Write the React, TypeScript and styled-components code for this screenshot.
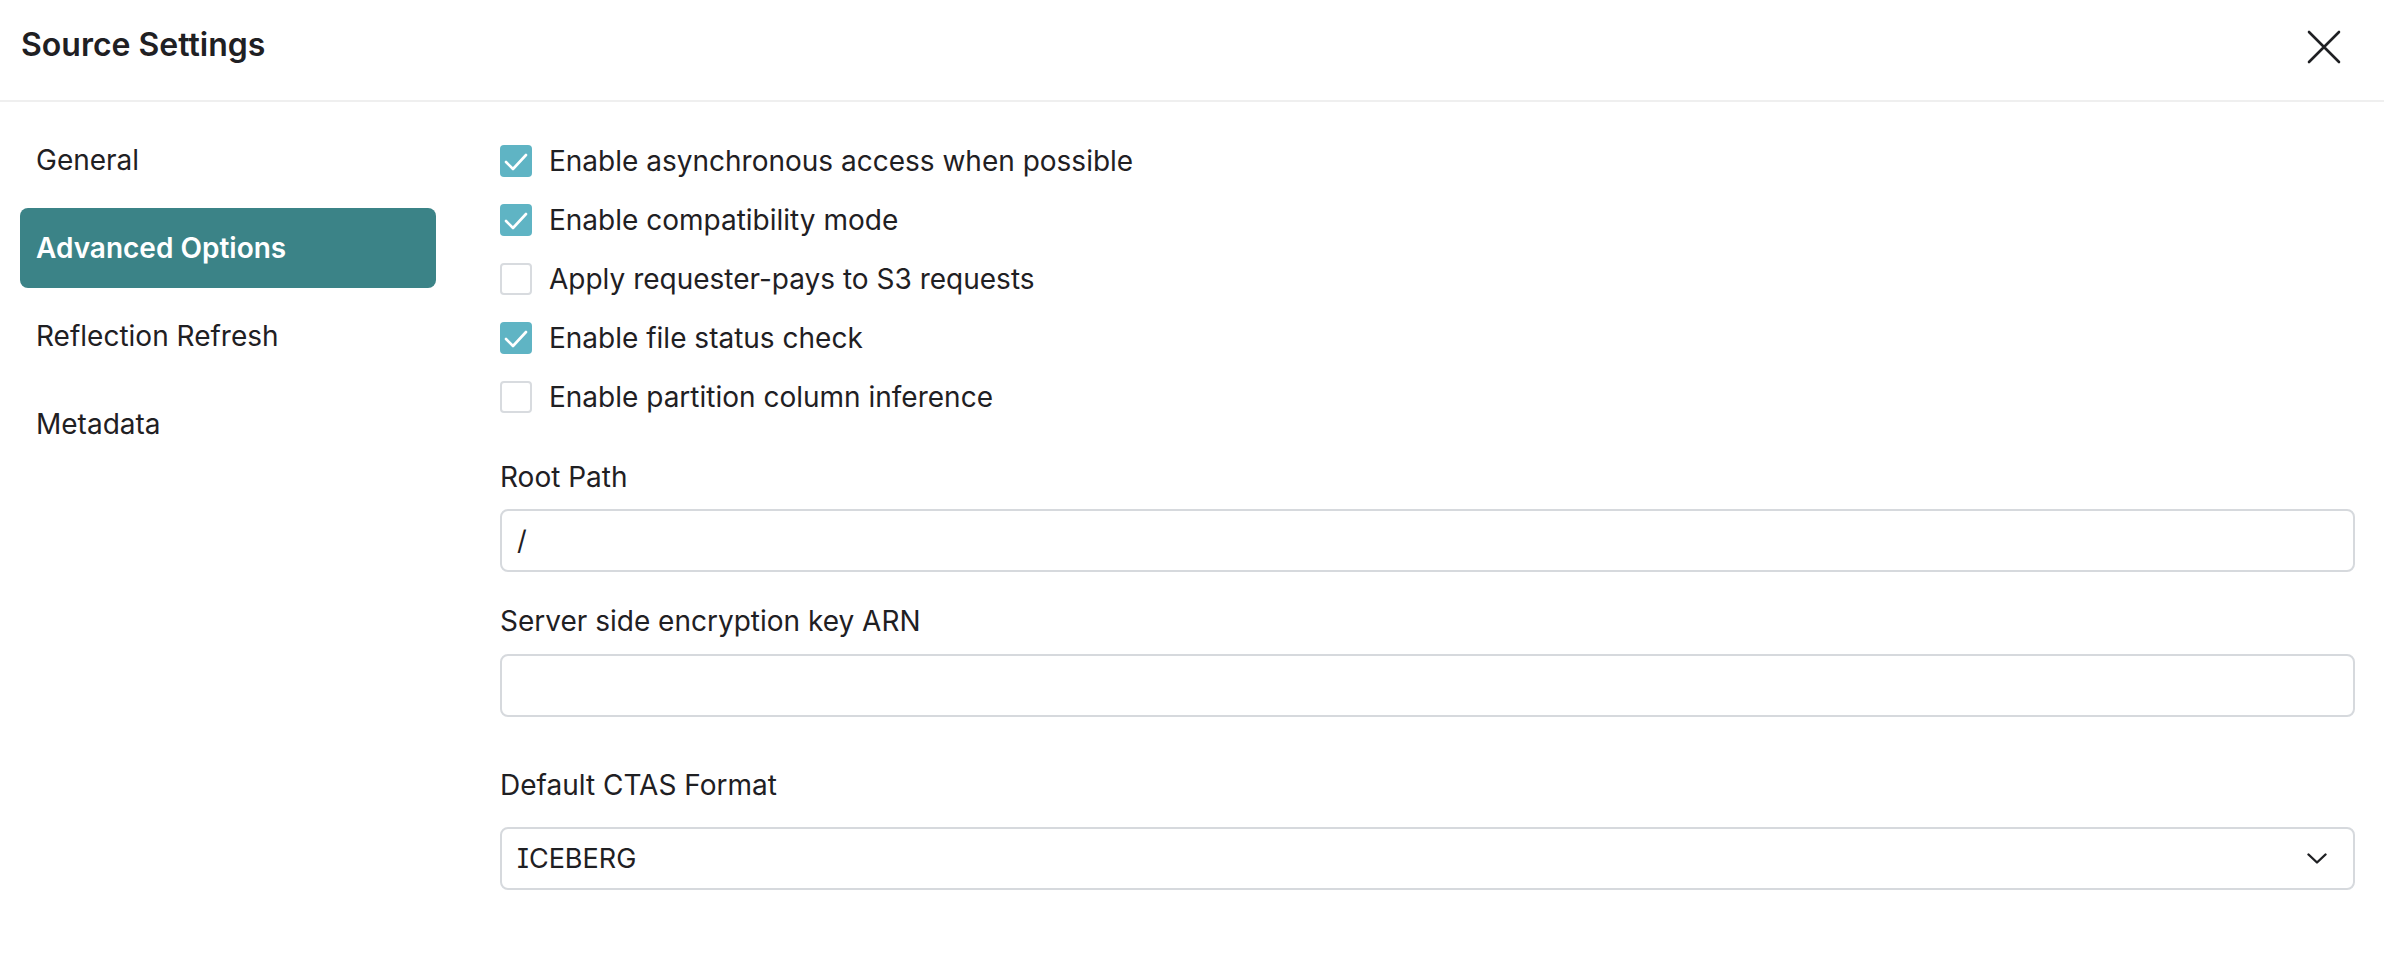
import React from "react";
import styled, { createGlobalStyle } from "styled-components";

const Global = createGlobalStyle`
  html, body { margin: 0; padding: 0; background: #ffffff; }
  body {
    font-family: Inter, "Noto Sans", "Liberation Sans", sans-serif;
    color: #1f2023;
    -webkit-font-smoothing: antialiased;
  }
  * { box-sizing: border-box; }
`;

const Dialog = styled.div`
  width: 2384px;
  height: 970px;
  background: #fff;
  display: flex;
  flex-direction: column;
`;

const Header = styled.header`
  height: 102px;
  flex: none;
  display: flex;
  align-items: flex-start;
  justify-content: space-between;
  padding: 27px 43px 0 21px;
  border-bottom: 2px solid #efefef;
`;

const Title = styled.h1`
  margin: 0;
  font-size: 32px;
  line-height: 36px;
  font-weight: 600;
  color: #1f2023;
`;

const CloseButton = styled.button`
  margin-top: 3px;
  width: 34px;
  height: 34px;
  padding: 0;
  border: 0;
  background: transparent;
  display: flex;
  align-items: center;
  justify-content: center;
  cursor: pointer;
`;

const Body = styled.div`
  flex: 1;
  display: flex;
  gap: 64px;
  padding: 0 29px 0 20px;
`;

const Sidebar = styled.nav`
  width: 416px;
  flex: none;
  display: flex;
  flex-direction: column;
  gap: 8px;
  padding-top: 18px;
`;

const NavItem = styled.div<{ $active?: boolean }>`
  height: 80px;
  display: flex;
  align-items: center;
  padding-left: 16px;
  border-radius: 8px;
  font-size: 28px;
  line-height: 33px;
  font-weight: ${(p) => (p.$active ? 600 : 400)};
  color: ${(p) => (p.$active ? "#ffffff" : "#1f2023")};
  background: ${(p) => (p.$active ? "#3b8387" : "transparent")};
`;

const Content = styled.main`
  flex: 1;
  display: flex;
  flex-direction: column;
  padding-top: 43px;
`;

const CheckList = styled.div`
  display: flex;
  flex-direction: column;
  gap: 27px;
`;

const CheckRow = styled.label`
  height: 32px;
  display: flex;
  align-items: center;
  gap: 17px;
  font-size: 28px;
  line-height: 33px;
  color: #1f2023;
`;

const Box = styled.span<{ $checked?: boolean }>`
  width: 32px;
  height: 32px;
  flex: none;
  border-radius: 4px;
  display: flex;
  align-items: center;
  justify-content: center;
  background: ${(p) => (p.$checked ? "#5fb4c4" : "#ffffff")};
  border: ${(p) => (p.$checked ? "none" : "2px solid #d8dbdf")};
`;

const Field = styled.div<{ $top: number; $gap: number }>`
  display: flex;
  flex-direction: column;
  gap: ${(p) => p.$gap}px;
  margin-top: ${(p) => p.$top}px;
`;

const Label = styled.div`
  font-size: 28px;
  line-height: 33px;
  color: #1f2023;
`;

const Input = styled.div`
  height: 63px;
  border: 2px solid #d6d9dd;
  border-radius: 8px;
  display: flex;
  align-items: center;
  justify-content: space-between;
  padding: 0 26px 0 15px;
  font-size: 27px;
  color: #1f2023;
  font-feature-settings: "cv08";
`;

const Check = () => (
  <svg width="32" height="32" viewBox="0 0 32 32" fill="none">
    <polyline points="6,17 13,24 26,10" stroke="#ffffff" strokeWidth="2.6" strokeLinecap="round" strokeLinejoin="round" />
  </svg>
);

const CheckItem = ({ checked, children }: { checked?: boolean; children: React.ReactNode }) => (
  <CheckRow>
    <Box $checked={checked}>{checked && <Check />}</Box>
    <span>{children}</span>
  </CheckRow>
);

export default function App() {
  return (
    <>
      <Global />
      <Dialog>
        <Header>
          <Title>Source Settings</Title>
          <CloseButton aria-label="Close">
            <svg width="34" height="34" viewBox="0 0 34 34" fill="none">
              <path d="M2 2 L32 32 M32 2 L2 32" stroke="#1f2023" strokeWidth="2.6" strokeLinecap="round" />
            </svg>
          </CloseButton>
        </Header>
        <Body>
          <Sidebar>
            <NavItem>General</NavItem>
            <NavItem $active>Advanced Options</NavItem>
            <NavItem>Reflection Refresh</NavItem>
            <NavItem>Metadata</NavItem>
          </Sidebar>
          <Content>
            <CheckList>
              <CheckItem checked>Enable asynchronous access when possible</CheckItem>
              <CheckItem checked>Enable compatibility mode</CheckItem>
              <CheckItem>Apply requester-pays to S3 requests</CheckItem>
              <CheckItem checked>Enable file status check</CheckItem>
              <CheckItem>Enable partition column inference</CheckItem>
            </CheckList>
            <Field $top={48} $gap={15}>
              <Label>Root Path</Label>
              <Input>/</Input>
            </Field>
            <Field $top={33} $gap={16}>
              <Label>Server side encryption key ARN</Label>
              <Input />
            </Field>
            <Field $top={52} $gap={25}>
              <Label>Default CTAS Format</Label>
              <Input>
                <span>ICEBERG</span>
                <svg width="20" height="11" viewBox="0 0 20 11" fill="none">
                  <path d="M1.5 1.5 L10 9.5 L18.5 1.5" stroke="#1f2023" strokeWidth="2.4" strokeLinecap="round" strokeLinejoin="round" />
                </svg>
              </Input>
            </Field>
          </Content>
        </Body>
      </Dialog>
    </>
  );
}
